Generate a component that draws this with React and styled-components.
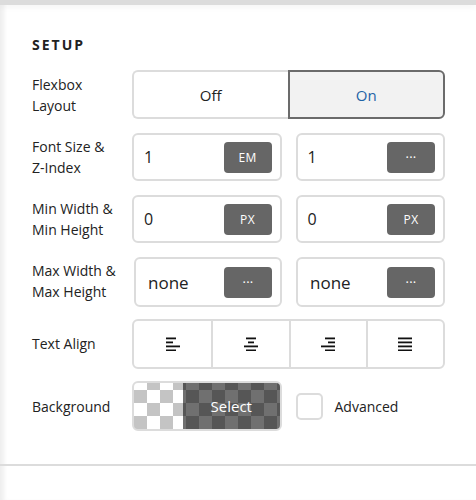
import React from 'react';
import styled, {createGlobalStyle} from 'styled-components';

const GlobalStyle = createGlobalStyle`
  html, body {
    margin: 0;
    padding: 0;
    background: #fff;
    font-family: "Open Sans", "Liberation Sans", sans-serif;
    color: #222;
  }
`;

const AlignIcon = ({type}) => {
  const lines = {
    left: [[0, 10], [0, 7], [0, 14], [0, 10]],
    center: [[2, 10], [4, 6], [0, 14], [2, 10]],
    right: [[4, 10], [7, 7], [0, 14], [4, 10]],
    justify: [[0, 14], [0, 14], [0, 14], [0, 14]],
  }[type];
  return (
    <svg width="14" height="14" viewBox="0 0 14 14">
      {lines.map(([x, w], i) => (
        <rect key={i} x={x} y={i * 4 + 0.5} width={w} height="1.8" fill="#111" />
      ))}
    </svg>
  );
};

export default function App() {
  return (
    <>
      <GlobalStyle />
      <Page>
        <TopBar />
        <Panel>
          <Title>SETUP</Title>
          <Grid>
            <Label>Flexbox<br />Layout</Label>
            <Toggle>
              <ToggleOption>Off</ToggleOption>
              <ToggleOption active>On</ToggleOption>
            </Toggle>

            <Label>Font Size &amp;<br />Z-Index</Label>
            <Pair>
              <Field>
                <Value>1</Value>
                <Unit>EM</Unit>
              </Field>
              <Field>
                <Value>1</Value>
                <Unit dots>···</Unit>
              </Field>
            </Pair>

            <Label>Min Width &amp;<br />Min Height</Label>
            <Pair>
              <Field>
                <Value>0</Value>
                <Unit>PX</Unit>
              </Field>
              <Field>
                <Value>0</Value>
                <Unit>PX</Unit>
              </Field>
            </Pair>

            <Label>Max Width &amp;<br />Max Height</Label>
            <Pair shifted>
              <Field tall>
                <Value wide>none</Value>
                <Unit dots>···</Unit>
              </Field>
              <Field tall>
                <Value wide>none</Value>
                <Unit dots>···</Unit>
              </Field>
            </Pair>

            <Label>Text Align</Label>
            <Segments>
              <Segment><AlignIcon type="left" /></Segment>
              <Segment><AlignIcon type="center" /></Segment>
              <Segment><AlignIcon type="right" /></Segment>
              <Segment><AlignIcon type="justify" /></Segment>
            </Segments>

            <Label>Background</Label>
            <Pair>
              <Swatch>
                <SwatchClear />
                <SwatchShade>Select</SwatchShade>
              </Swatch>
              <CheckRow>
                <Checkbox />
                <CheckLabel>Advanced</CheckLabel>
              </CheckRow>
            </Pair>
          </Grid>
        </Panel>
        <Divider />
      </Page>
    </>
  );
}

const Page = styled.div`
  display: flex;
  flex-direction: column;
  width: 476px;
  height: 500px;
  background: #fff;
  box-shadow: inset 6px 0 4px -2px #efefef;
`;

const TopBar = styled.div`
  height: 5px;
  background: #dcdcdc;
  box-shadow: 0 2px 6px rgba(0, 0, 0, 0.05);
`;

const Panel = styled.div`
  padding: 30px 31px 33px 32px;
`;

const Title = styled.div`
  font-size: 14px;
  font-weight: 700;
  letter-spacing: 2px;
  color: #222;
  line-height: 20px;
  margin-bottom: 15px;
`;

const Grid = styled.div`
  display: grid;
  grid-template-columns: 100px 1fr;
  row-gap: 14px;
  align-items: center;
`;

const Label = styled.div`
  font-size: 14px;
  line-height: 21px;
  color: #222;
`;

const Toggle = styled.div`
  display: flex;
  height: 49px;
`;

const ToggleOption = styled.div`
  flex: 1;
  display: flex;
  align-items: center;
  justify-content: center;
  font-size: 15px;
  box-sizing: border-box;
  color: ${p => (p.active ? '#1f63a6' : '#222')};
  background: ${p => (p.active ? '#f2f2f2' : '#fff')};
  border: 2px solid ${p => (p.active ? '#6b6b6b' : '#dcdcdc')};
  border-radius: ${p => (p.active ? '0 6px 6px 0' : '6px 0 0 6px')};
  ${p => !p.active && 'border-right: none;'}
`;

const Pair = styled.div`
  display: grid;
  grid-template-columns: ${p => (p.shifted ? '148px 1fr' : '1fr 1fr')};
  column-gap: 14px;
  ${p => p.shifted && 'padding-left: 2px; height: 50px; margin-bottom: -2px;'}
`;

const Field = styled.div`
  display: flex;
  align-items: center;
  justify-content: space-between;
  height: ${p => (p.tall ? '50px' : '48px')};
  box-sizing: border-box;
  border: 2px solid #dcdcdc;
  border-radius: 6px;
  padding: 0 8px 0 10px;
`;

const Value = styled.span`
  font-size: ${p => (p.wide ? '17px' : '16px')};
  color: #222;
  ${p => p.wide && 'padding-left: 2px;'}
`;

const Unit = styled.span`
  display: flex;
  align-items: center;
  justify-content: center;
  width: 48px;
  height: 31px;
  background: #666;
  border-radius: 4px;
  color: #fff;
  font-size: ${p => (p.dots ? '13px' : '12px')};
  letter-spacing: 0.3px;
`;

const Segments = styled.div`
  display: grid;
  grid-template-columns: repeat(4, 1fr);
  height: 50px;
  margin-bottom: -2px;
  box-sizing: border-box;
  border: 2px solid #dcdcdc;
  border-radius: 6px;
  overflow: hidden;
`;

const Segment = styled.div`
  display: flex;
  align-items: center;
  justify-content: center;
  & + & {
    border-left: 2px solid #dcdcdc;
  }
`;

const Swatch = styled.div`
  display: flex;
  height: 50px;
  box-sizing: border-box;
  border: 2px solid #dcdcdc;
  border-radius: 6px;
  overflow: hidden;
  background: repeating-conic-gradient(#c4c4c4 0 25%, #fff 0 50%) 0 -6px / 26px 26px;
`;

const SwatchClear = styled.div`
  width: 49px;
`;

const SwatchShade = styled.div`
  flex: 1;
  display: flex;
  align-items: center;
  justify-content: center;
  background: rgba(0, 0, 0, 0.56);
  color: #fff;
  font-size: 15px;
`;

const CheckRow = styled.div`
  display: flex;
  align-items: center;
  gap: 12px;
`;

const Checkbox = styled.div`
  width: 27px;
  height: 27px;
  box-sizing: border-box;
  border: 2px solid #dcdcdc;
  border-radius: 5px;
  background: #fff;
`;

const CheckLabel = styled.span`
  font-size: 14px;
  color: #222;
`;

const Divider = styled.div`
  height: 2px;
  background: #dcdcdc;
`;
